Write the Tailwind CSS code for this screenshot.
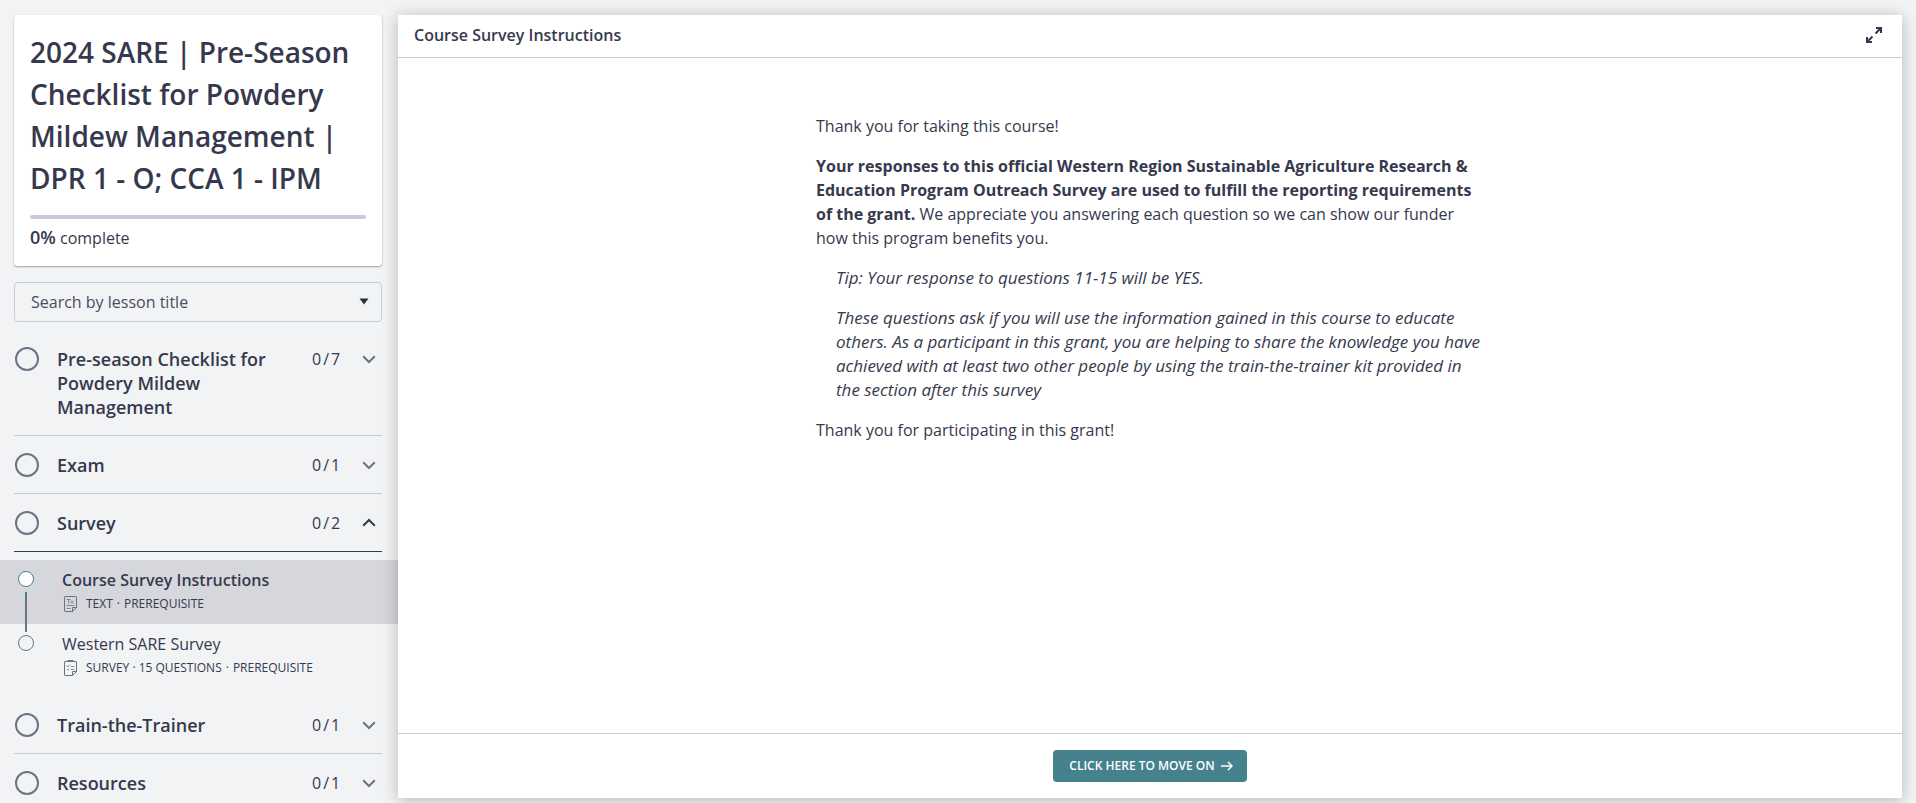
<!DOCTYPE html>
<html lang="en">
<head>
    <meta charset="UTF-8">
    <meta name="viewport" content="width=device-width, initial-scale=1.0">
    <title>Course Survey Instructions</title>
    <script src="https://cdn.jsdelivr.net/npm/@tailwindcss/browser@4"></script>
</head>
<body class="bg-[#f1f3f5] font-['Open_Sans',sans-serif] text-base text-[#36394d]">
    <div class="flex h-screen overflow-hidden">

        <!-- Sidebar -->
        <aside class="w-[398px] shrink-0 overflow-y-auto pt-[15px] [scrollbar-width:none]">
            <div class="mx-[14px] mr-4 rounded bg-white px-4 pt-4 pb-4 shadow-[0_1px_2px_rgba(0,0,0,0.35)]">
                <h1 class="text-[28px] leading-[42px] font-semibold">2024 SARE | Pre-Season Checklist for Powdery Mildew Management | DPR 1 - O; CCA 1 - IPM</h1>
                <div class="mt-4 h-1 rounded-full bg-[#c8cad7]"></div>
                <p class="mt-[7px] leading-6"><span class="text-lg leading-none font-semibold">0%</span> complete</p>
            </div>

            <div class="relative mt-4 mr-4 ml-[14px]">
                <input type="text" aria-label="Search by lesson title" placeholder="Search by lesson title" class="block h-10 w-full rounded border border-[#c8cad7] px-4 placeholder:text-[#4a4d60] placeholder:opacity-100">
                <svg class="pointer-events-none absolute top-4 right-[13px] h-[7px] w-[10px]" viewBox="0 0 10 7"><path d="M0.5 0.5h9L5 6.5z" fill="#2c2f42"/></svg>
            </div>

            <nav class="mt-2">
                <div class="mr-4 ml-[14px] border-b border-[#c8cad7]">
                    <button type="button" class="flex w-full items-start pt-[17px] pr-[6px] pb-4 pl-px text-left leading-6">
                        <span class="size-6 shrink-0 rounded-full border-2 border-[#6f7185]"></span>
                        <span class="ml-[18px] w-[238px] pr-4 text-lg leading-6 font-semibold">Pre-season Checklist for Powdery Mildew Management</span>
                        <span class="ml-[17px] flex gap-[2px]"><span>0</span><span>/</span><span>7</span></span>
                        <svg class="mt-[6px] ml-auto h-3 w-[14px]" viewBox="0 0 14 12" fill="none" stroke="#6f7185" stroke-width="2"><path d="M1.2 3.2 7 9l5.800-5.800"/></svg>
                    </button>
                </div>
                <div class="mr-4 ml-[14px] border-b border-[#c8cad7]">
                    <button type="button" class="flex w-full items-start pt-[17px] pr-[6px] pb-4 pl-px text-left leading-6">
                        <span class="size-6 shrink-0 rounded-full border-2 border-[#6f7185]"></span>
                        <span class="ml-[18px] w-[238px] pr-4 text-lg leading-6 font-semibold">Exam</span>
                        <span class="ml-[17px] flex gap-[2px]"><span>0</span><span>/</span><span>1</span></span>
                        <svg class="mt-[6px] ml-auto h-3 w-[14px]" viewBox="0 0 14 12" fill="none" stroke="#6f7185" stroke-width="2"><path d="M1.2 3.2 7 9l5.800-5.800"/></svg>
                    </button>
                </div>
                <div class="mr-4 ml-[14px] border-b border-[#36394d]">
                    <button type="button" class="flex w-full items-start pt-[17px] pr-[6px] pb-4 pl-px text-left leading-6">
                        <span class="size-6 shrink-0 rounded-full border-2 border-[#6f7185]"></span>
                        <span class="ml-[18px] w-[238px] pr-4 text-lg leading-6 font-semibold">Survey</span>
                        <span class="ml-[17px] flex gap-[2px]"><span>0</span><span>/</span><span>2</span></span>
                        <svg class="mt-[6px] ml-auto h-3 w-[14px]" viewBox="0 0 14 12" fill="none" stroke="#36394d" stroke-width="2"><path d="M1.2 8.800 7 3l5.800 5.800"/></svg>
                    </button>
                </div>

                <!-- Survey lessons -->
                <ul class="py-2">
                    <li class="relative bg-[#d6d7dd]">
                        <a href="#" class="flex h-16 pt-2 pl-[18px]">
                            <span class="mt-[3px] size-4 shrink-0 rounded-full border border-[#46818e] bg-white"></span>
                            <span class="ml-7">
                                <span class="block leading-6 font-semibold">Course Survey Instructions</span>
                                <span class="flex items-center text-xs leading-6">
                                    <svg class="mr-2 ml-px h-4 w-[15px]" viewBox="0 0 15 16" fill="none" stroke="#6f7185"><path d="M9.500 15.500H2A.8.8 0 0 1 1.500 15V1.200A.7.7 0 0 1 2 .5h11a.7.7 0 0 1 .5.7v10.300L9.500 15.500v-4h4"/><path d="M3.500 9.500h8M3.500 12.500h4M3.500 3.500h4M5.500 3.500v4M7.500 4.800l3 2.700M10.500 4.800l-3 2.700" stroke-width=".8"/></svg>
                                    TEXT<span class="mx-1">·</span>PREREQUISITE
                                </span>
                            </span>
                        </a>
                        <span class="absolute top-8 left-[25px] z-10 h-10 w-[2px] bg-[#6f7185]"><span class="block h-2 bg-[#46818e]"></span></span>
                    </li>
                    <li>
                        <a href="#" class="flex h-16 pt-2 pl-[18px]">
                            <span class="mt-[3px] size-4 shrink-0 rounded-full border border-[#6f7185]"></span>
                            <span class="ml-7">
                                <span class="block leading-6">Western SARE Survey</span>
                                <span class="flex items-center text-xs leading-6">
                                    <svg class="mr-2 ml-px h-4 w-[15px]" viewBox="0 0 15 16" fill="none" stroke="#6f7185"><path d="M9.500 15.500H2A.8.8 0 0 1 1.500 15V2A.7.7 0 0 1 2 1.500h11a.7.7 0 0 1 .5.5v9.500L9.500 15.500v-4h4"/><path d="M8 6.500h3.500M8 9.500h3.500M3.500 5.500l1.200 1.500L7 4.500M4 9.500h2" stroke-width=".8"/><path d="M4.500 1h6" stroke-width="2"/></svg>
                                    SURVEY · 15 QUESTIONS<span class="mx-1">·</span>PREREQUISITE
                                </span>
                            </span>
                        </a>
                    </li>
                </ul>

                <div class="mr-4 ml-[14px] border-b border-[#c8cad7]">
                    <button type="button" class="flex w-full items-start pt-[17px] pr-[6px] pb-4 pl-px text-left leading-6">
                        <span class="size-6 shrink-0 rounded-full border-2 border-[#6f7185]"></span>
                        <span class="ml-[18px] w-[238px] pr-4 text-lg leading-6 font-semibold">Train-the-Trainer</span>
                        <span class="ml-[17px] flex gap-[2px]"><span>0</span><span>/</span><span>1</span></span>
                        <svg class="mt-[6px] ml-auto h-3 w-[14px]" viewBox="0 0 14 12" fill="none" stroke="#6f7185" stroke-width="2"><path d="M1.2 3.2 7 9l5.800-5.800"/></svg>
                    </button>
                </div>
                <div class="mr-4 ml-[14px] border-b border-[#c8cad7]">
                    <button type="button" class="flex w-full items-start pt-[17px] pr-[6px] pb-4 pl-px text-left leading-6">
                        <span class="size-6 shrink-0 rounded-full border-2 border-[#6f7185]"></span>
                        <span class="ml-[18px] w-[238px] pr-4 text-lg leading-6 font-semibold">Resources</span>
                        <span class="ml-[17px] flex gap-[2px]"><span>0</span><span>/</span><span>1</span></span>
                        <svg class="mt-[6px] ml-auto h-3 w-[14px]" viewBox="0 0 14 12" fill="none" stroke="#6f7185" stroke-width="2"><path d="M1.2 3.2 7 9l5.800-5.800"/></svg>
                    </button>
                </div>
            </nav>
        </aside>

        <!-- Lesson panel -->
        <main class="relative mt-[15px] mr-[14px] mb-[5px] flex min-w-0 flex-1 flex-col bg-white shadow-[0_2px_15px_rgba(0,0,0,0.25)]">
            <header class="flex h-[43px] shrink-0 items-center justify-between border-b border-[#c8cad7] px-4 pb-[2px]">
                <h2 class="font-semibold">Course Survey Instructions</h2>
                <button type="button" aria-label="Full screen" class="mr-1">
                    <svg class="size-4" viewBox="0 0 16 16" fill="none" stroke="#36394d" stroke-width="2"><path d="M10 1h5v5M15 1l-5.500 5.500M1 10v5h5M1 15l5.500-5.500"/></svg>
                </button>
            </header>

            <article class="flex-1 overflow-y-auto pt-14">
                <div class="mx-auto max-w-[668px] space-y-4 leading-6">
                    <p>Thank you for taking this course!</p>
                    <p><strong class="font-bold">Your responses to this official Western Region Sustainable Agriculture Research &amp; Education Program Outreach Survey are used to fulfill the reporting requirements of the grant.</strong> We appreciate you answering each question so we can show our funder how this program benefits you.</p>
                    <p class="pl-5 text-[17px] leading-6 italic">Tip: Your response to questions 11-15 will be YES.</p>
                    <p class="pl-5 text-[17px] leading-6 italic">These questions ask if you will use the information gained in this course to educate others. As a participant in this grant, you are helping to share the knowledge you have achieved with at least two other people by using the train-the-trainer kit provided in the section after this survey</p>
                    <p>Thank you for participating in this grant!</p>
                </div>
            </article>

            <footer class="flex justify-center border-t border-[#c8cad7] py-4">
                <button type="button" class="flex h-8 items-center gap-[6px] rounded bg-[#46818e] pr-[14px] pl-4 text-xs font-semibold text-white">
                    CLICK HERE TO MOVE ON
                    <svg class="h-[10px] w-3" viewBox="0 0 12 10" fill="none" stroke="#fff" stroke-width="1.500"><path d="M0 5h11M7 1l4 4-4 4"/></svg>
                </button>
            </footer>
        </main>
    </div>
</body>
</html>
